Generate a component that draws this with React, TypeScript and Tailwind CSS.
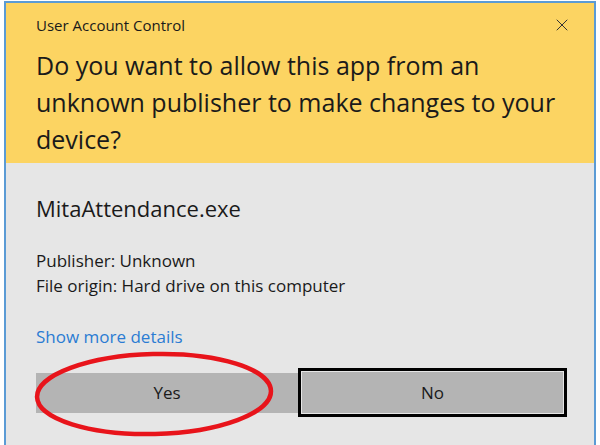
import { X } from "lucide-react";

export default function App() {
  return (
    <div className="h-[445px] w-[600px] overflow-hidden bg-white pl-[4px] pt-[1px] font-['Open_Sans',sans-serif] text-[#1a1a1a]">
      <div className="relative flex h-[460px] w-[592px] flex-col border-x-2 border-t-2 border-[#5b9bd5]">
        {/* Yellow header */}
        <div className="h-[160px] bg-[#fcd462] pl-[30px] pr-[22px]">
          <div className="flex h-[44px] items-center justify-between">
            <span className="text-[15px] leading-5">User Account Control</span>
            <X className="h-[20px] w-[20px] text-[#333]" strokeWidth={1.2} />
          </div>
          <h1 className="whitespace-nowrap text-[25px] leading-[37px] font-normal">
            Do you want to allow this app from an
            <br />
            unknown publisher to make changes to your
            <br />
            device?
          </h1>
        </div>

        {/* Gray body */}
        <div className="flex-1 bg-[#e6e6e6] pl-[30px] pr-[27px]">
          <p className="mt-[31px] text-[22px] leading-7">MitaAttendance.exe</p>
          <div className="mt-[26px] text-[17px] leading-[25px]">
            <p>Publisher: Unknown</p>
            <p>File origin: Hard drive on this computer</p>
          </div>
          <p className="mt-[26px] text-[17px] leading-[25px] text-[#2b7cd3]">Show more details</p>
          <div className="mt-[19px] flex items-center">
            <button className="h-[40px] w-[262px] bg-[#b4b4b4] text-[17px]">Yes</button>
            <button className="h-[49px] flex-1 border-[3px] border-black bg-[#b4b4b4] text-[17px] shadow-[inset_0_0_0_1px_#e6e6e6]">
              No
            </button>
          </div>
        </div>

        {/* Red marker ellipse around "Yes" */}
        <svg
          className="pointer-events-none absolute left-[25px] top-[345px]"
          width="246"
          height="94"
          viewBox="0 0 246 94"
        >
          <ellipse
            cx="123"
            cy="46"
            rx="117"
            ry="40"
            fill="none"
            stroke="#e8141b"
            strokeWidth="4.5"
            transform="rotate(-1.5 123 46)"
          />
        </svg>
      </div>
    </div>
  );
}
